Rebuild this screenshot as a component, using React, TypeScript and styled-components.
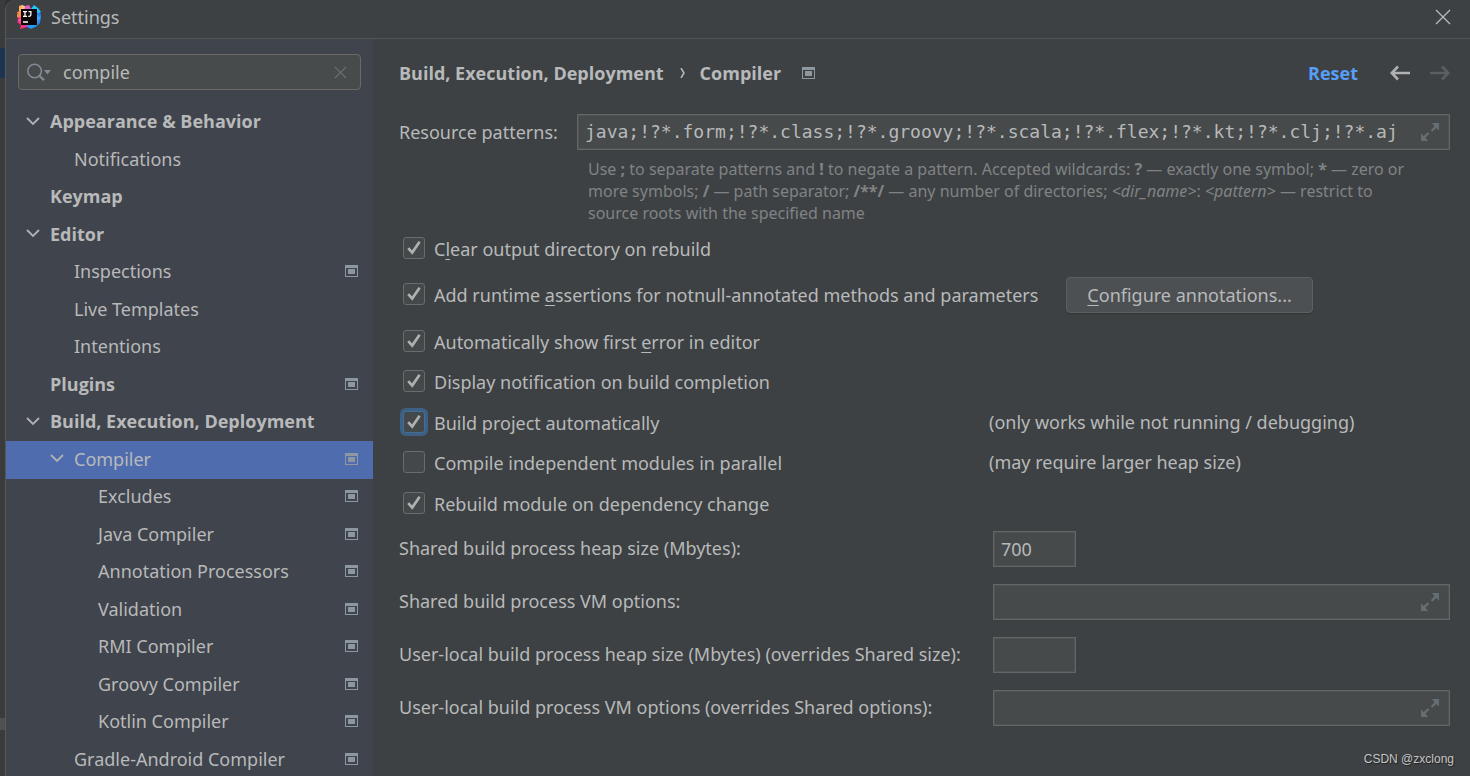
import React, { useState } from "react";
import styled, { createGlobalStyle, css } from "styled-components";

const Global = createGlobalStyle`
  *, *::before, *::after { box-sizing: border-box; }
  html, body { margin: 0; padding: 0; height: 100%; }
  #root { height: 100%; }
  body {
    background: #313335;
    color: #b8b9ba;
    font-family: "Noto Sans", "Open Sans", sans-serif;
    font-size: 18px;
    line-height: 24px;
    overflow: hidden;
  }
  input, button { font: inherit; color: inherit; }
`;

const Desktop = styled.div`
  display: flex;
  height: 100%;
`;

const EditorStrip = styled.div`
  display: flex;
  flex-direction: column;
  flex: none;
  width: 5px;
  background: #3a3b3c;
`;

const StripMark = styled.span<{ $top: number; $height: number; $color: string }>`
  flex: none;
  height: ${(p) => p.$height}px;
  margin-top: ${(p) => p.$top}px;
  background: ${(p) => p.$color};
`;

const Window = styled.main`
  display: flex;
  flex-direction: column;
  flex: 1;
  min-width: 0;
  background: #3d4143;
  border-left: 1px solid #56585a;
  border-top-left-radius: 10px;
  overflow: hidden;
`;

const TitleBar = styled.header`
  display: flex;
  align-items: center;
  flex: none;
  height: 39px;
  padding: 0 19px 4px 11px;
  border-bottom: 1px solid #525557;
`;

const TitleText = styled.h1`
  flex: 1;
  margin: 0 0 0 10px;
  font-size: 18px;
  font-weight: 400;
`;

const IconButton = styled.button`
  display: inline-flex;
  flex: none;
  padding: 0;
  border: 0;
  background: none;
`;

const Body = styled.div`
  display: flex;
  flex: 1;
  min-height: 0;
`;

const Sidebar = styled.aside`
  display: flex;
  flex-direction: column;
  flex: none;
  width: 367px;
  background: #40444c;
  overflow: hidden;
`;

const SearchBox = styled.label`
  display: flex;
  align-items: center;
  flex: none;
  height: 36px;
  margin: 15px 12px 14px;
  padding: 0 13px 0 8px;
  gap: 12px;
  background: #474b4c;
  border: 1px solid #6a6a68;
  border-radius: 4px;
`;

const PlainInput = styled.input<{ $mono?: boolean }>`
  flex: 1;
  min-width: 0;
  padding: 0;
  border: 0;
  outline: 0;
  background: none;
  ${(p) =>
    p.$mono &&
    css`
      font-family: "DejaVu Sans Mono", monospace;
    `}
`;

const Tree = styled.ul`
  margin: 0;
  padding: 0;
  list-style: none;
`;

const TreeRow = styled.li<{ $level: number; $selected?: boolean }>`
  display: flex;
  align-items: center;
  height: 37px;
  padding: 0 14px 3px ${(p) => 20 + p.$level * 24}px;
  background: ${(p) => (p.$selected ? "#4f6dae" : "transparent")};
  &:nth-child(even) {
    height: 38px;
  }
`;

const TreeToggle = styled.span`
  display: flex;
  flex: none;
  width: 24px;
`;

const boldFace = css`
  font-family: "Open Sans", "Noto Sans", sans-serif;
  font-weight: 700;
`;

const TreeLabel = styled.span<{ $bold?: boolean }>`
  flex: 1;
  white-space: nowrap;
  ${(p) => p.$bold && boldFace}
`;

const Content = styled.section`
  flex: 1;
  min-width: 0;
  padding: 22px 20px 0 26px;
`;

const Header = styled.div`
  display: flex;
  align-items: center;
  height: 24px;
`;

const Crumbs = styled.h2`
  display: flex;
  align-items: center;
  flex: 1;
  gap: 21px;
  margin: 0;
  font-size: 18px;
  ${boldFace}
`;

const CrumbPath = styled.span`
  display: flex;
  align-items: center;
  gap: 15px;
`;

const ResetLink = styled.a`
  margin-right: 32px;
  color: #589df6;
  text-decoration: none;
  ${boldFace}
`;

const HistoryButtons = styled.div`
  display: flex;
  gap: 20px;
`;

const PatternRow = styled.div`
  display: grid;
  grid-template-columns: 178px 1fr;
  align-items: center;
  margin-top: 29px;
`;

const Field = styled.div<{ $short?: boolean }>`
  display: flex;
  align-items: center;
  gap: 12px;
  width: ${(p) => (p.$short ? "83px" : "auto")};
  height: 36px;
  padding: 0 10px 0 7px;
  background: #464a4b;
  border: 1px solid #646566;
  box-shadow: inset 0 0 0 1px #505354;
`;

const Help = styled.p`
  grid-column: 2;
  margin: 8px 32px 0 11px;
  color: #808385;
  font-size: 16px;
  line-height: 22px;
`;

const Options = styled.div`
  margin-top: 4px;
`;

const OptionRow = styled.div<{ $tall?: boolean }>`
  display: grid;
  grid-template-columns: ${(p) => (p.$tall ? "auto 1fr" : "590px 1fr")};
  align-items: center;
  height: 41px;
  &:nth-child(even) {
    height: ${(p) => (p.$tall ? 52 : 40)}px;
  }
`;

const CheckLabel = styled.label`
  display: flex;
  align-items: center;
  padding-left: 4px;
  gap: 9px;
  white-space: nowrap;
`;

const CheckBox = styled.input<{ $ring?: boolean }>`
  appearance: none;
  flex: none;
  width: 22px;
  height: 22px;
  margin: 0 0 2px;
  border: 1px solid #6b6b6b;
  border-radius: 3px;
  background: #43494a center / 20px 20px no-repeat;
  &:checked {
    background-image: url("data:image/svg+xml,%3Csvg xmlns='http://www.w3.org/2000/svg' viewBox='0 0 20 20'%3E%3Cpath d='M4.2 10.2l4 4.4L15.6 3.8' fill='none' stroke='%23b0b0b0' stroke-width='2.7'/%3E%3C/svg%3E");
  }
  ${(p) =>
    p.$ring &&
    css`
      border-color: #466d94;
      box-shadow: 0 0 0 3px #3d6185;
    `}
`;

const Note = styled.span`
  padding-bottom: 2px;
`;

const Mnemonic = styled.u`
  text-underline-offset: 3px;
  text-decoration-thickness: 1px;
`;

const PushButton = styled.button`
  justify-self: start;
  height: 36px;
  margin-left: 28px;
  padding: 0 20px;
  background: #4c5052;
  border: 1px solid #5e6060;
  border-radius: 4px;
  box-shadow: 0 1px 1px #333638;
`;

const Fields = styled.div`
  display: grid;
  grid-template-columns: 590px 1fr;
  align-items: center;
  row-gap: 17px;
  padding-top: 7px;
  ${Field} {
    margin-left: 4px;
  }
`;

const FieldLabel = styled.label`
  padding-bottom: 2px;
`;

const Watermark = styled.div`
  position: absolute;
  right: 16px;
  bottom: 9px;
  color: #c4c5c6;
  font-family: "Liberation Sans", sans-serif;
  font-size: 12px;
  line-height: 16px;
  text-shadow: 1px 1px 1px #222222;
`;

const Logo = () => (
  <svg width="24" height="24" viewBox="0 0 24 24" aria-hidden="true">
    <path d="M2 1l3-1 3 2-2 8-5 3-1-3 2-3z" fill="#fdb25c" />
    <path d="M5 0l5 2-1 4-4 1z" fill="#fcc97a" />
    <path d="M8 1l4-1 2 4-7 2z" fill="#e45cc8" />
    <path d="M0 7l6-2v9l-6-2 1-2z" fill="#fb8a4a" />
    <path d="M0 12l6 1v6l5 2-4 2-4 1 1-4-4-3 2-2z" fill="#fe2f7c" />
    <path d="M0 15l5-2v5z" fill="#f553b0" />
    <path d="M8 19l6 1-1 3-4-1z" fill="#9a58d8" />
    <path d="M12 19h7l4-2-3 4-6 3-3-2z" fill="#1f9cf5" />
    <path d="M18 5l5 1 1 5-1 7-4 3z" fill="#2586f2" />
    <path d="M14 4l3-4 4 3 3 4-5 1z" fill="#22c9f5" />
    <path d="M19 9l5 4-5 5z" fill="#3aa6fb" />
    <rect x="4" y="4" width="16" height="16" fill="#0e0708" />
    <path d="M6 6.6h4M8 6v5.600M6 11.400h4M11.500 6.600h2.400v3q0 1.800-1.600 1.800h-1" fill="none" stroke="#fff" strokeWidth="1.3" />
    <path d="M6 17h5" stroke="#fff" strokeWidth="1.6" />
  </svg>
);

const CloseIcon = ({ size, color }: { size: number; color: string }) => (
  <svg width={size} height={size} viewBox="0 0 16 16" aria-hidden="true">
    <path d="M1 1l14 14M15 1L1 15" stroke={color} strokeWidth="1.3" />
  </svg>
);

const SearchIcon = () => (
  <svg width="24" height="20" viewBox="0 0 24 20" aria-hidden="true">
    <circle cx="7.6" cy="9" r="6.8" fill="none" stroke="#818b91" strokeWidth="1.6" />
    <path d="M12 13.5l5 4.6" stroke="#818b91" strokeWidth="2.2" />
    <path d="M17 8h7l-3.5 4.5z" fill="#818b91" />
  </svg>
);

const Chevron = () => (
  <svg width="14" height="9" viewBox="0 0 14 9" aria-hidden="true">
    <path d="M1 1l6 6 6-6" fill="none" stroke="#afb1b3" strokeWidth="1.8" />
  </svg>
);

const ProjectIcon = () => (
  <svg width="14" height="12" viewBox="0 0 14 12" aria-hidden="true">
    <path d="M0 0h13v12H0zM1 3v8h11V3z" fill="#8c979f" fillRule="evenodd" />
    <rect x="3" y="4" width="7" height="5" fill="#8c979f" />
  </svg>
);

const ArrowIcon = ({ color, flip }: { color: string; flip?: boolean }) => (
  <svg width="20" height="16" viewBox="0 0 20 16" aria-hidden="true">
    <path
      d={flip ? "M0 8h18M12 1.5L18.3 8 12 14.5" : "M20 8H2M8 1.5L1.7 8 8 14.5"}
      fill="none"
      stroke={color}
      strokeWidth="2.6"
    />
  </svg>
);

const ExpandIcon = () => (
  <svg width="18" height="18" viewBox="0 0 18 18" aria-hidden="true">
    <path d="M18 0v7.5L15.3 5l-4 3.8-1.600-1.600 3.800-4L11 0zM0 18v-7.500L2.700 13l4-3.800 1.600 1.600-3.800 4L7 18z" fill="#646e73" />
  </svg>
);

type Node = { label: string; level: number; bold?: boolean; open?: boolean; project?: boolean };

const nodes: Node[] = [
  { label: "Appearance & Behavior", level: 0, bold: true, open: true },
  { label: "Notifications", level: 1 },
  { label: "Keymap", level: 0, bold: true },
  { label: "Editor", level: 0, bold: true, open: true },
  { label: "Inspections", level: 1, project: true },
  { label: "Live Templates", level: 1 },
  { label: "Intentions", level: 1 },
  { label: "Plugins", level: 0, bold: true, project: true },
  { label: "Build, Execution, Deployment", level: 0, bold: true, open: true },
  { label: "Compiler", level: 1, open: true, project: true },
  { label: "Excludes", level: 2, project: true },
  { label: "Java Compiler", level: 2, project: true },
  { label: "Annotation Processors", level: 2, project: true },
  { label: "Validation", level: 2, project: true },
  { label: "RMI Compiler", level: 2, project: true },
  { label: "Groovy Compiler", level: 2, project: true },
  { label: "Kotlin Compiler", level: 2, project: true },
  { label: "Gradle-Android Compiler", level: 1, project: true },
];

type Option = { before: string; key?: string; after?: string; checked: boolean; note?: string; ring?: boolean; configure?: boolean };

const options: Option[] = [
  { before: "C", key: "l", after: "ear output directory on rebuild", checked: true },
  {
    before: "Add runtime ",
    key: "a",
    after: "ssertions for notnull-annotated methods and parameters",
    checked: true,
    configure: true,
  },
  { before: "Automatically show first ", key: "e", after: "rror in editor", checked: true },
  { before: "Display notification on build completion", checked: true },
  { before: "Build project automatically", checked: true, ring: true, note: "(only works while not running / debugging)" },
  { before: "Compile independent modules in parallel", checked: false, note: "(may require larger heap size)" },
  { before: "Rebuild module on dependency change", checked: true },
];

const fields = [
  { id: "shared-heap", label: "Shared build process heap size (Mbytes):", value: "700", short: true },
  { id: "shared-vm", label: "Shared build process VM options:", value: "" },
  { id: "local-heap", label: "User-local build process heap size (Mbytes) (overrides Shared size):", value: "", short: true },
  { id: "local-vm", label: "User-local build process VM options (overrides Shared options):", value: "" },
];

const ExpandButton = () => (
  <IconButton type="button" aria-label="Expand">
    <ExpandIcon />
  </IconButton>
);

export default function App() {
  const [query, setQuery] = useState("compile");
  return (
    <>
      <Global />
      <Desktop>
        <EditorStrip>
          <StripMark $top={48} $height={30} $color="#1d3450" />
          <StripMark $top={640} $height={12} $color="#4e5052" />
        </EditorStrip>
        <Window>
          <TitleBar>
            <Logo />
            <TitleText>Settings</TitleText>
            <IconButton type="button" aria-label="Close">
              <CloseIcon size={16} color="#b8babb" />
            </IconButton>
          </TitleBar>
          <Body>
            <Sidebar>
              <SearchBox>
                <SearchIcon />
                <PlainInput aria-label="Search settings" value={query} onChange={(e) => setQuery(e.target.value)} />
                <IconButton type="button" aria-label="Clear search" onClick={() => setQuery("")}>
                  <CloseIcon size={13} color="#6f7577" />
                </IconButton>
              </SearchBox>
              <Tree>
                {nodes.map((n) => (
                  <TreeRow key={n.label} $level={n.level} $selected={n.label === "Compiler"}>
                    <TreeToggle>{n.open && <Chevron />}</TreeToggle>
                    <TreeLabel $bold={n.bold}>{n.label}</TreeLabel>
                    {n.project && <ProjectIcon />}
                  </TreeRow>
                ))}
              </Tree>
            </Sidebar>
            <Content>
              <Header>
                <Crumbs>
                  <CrumbPath>
                    <span>Build, Execution, Deployment</span>
                    <svg width="6" height="10" viewBox="0 0 6 10" aria-hidden="true">
                      <path d="M2 0l3 5-3 5" fill="none" stroke="#bbbbbb" strokeWidth="1.5" />
                    </svg>
                    <span>Compiler</span>
                  </CrumbPath>
                  <ProjectIcon />
                </Crumbs>
                <ResetLink href="#reset">Reset</ResetLink>
                <HistoryButtons>
                  <IconButton type="button" aria-label="Back">
                    <ArrowIcon color="#afb1b3" />
                  </IconButton>
                  <IconButton type="button" aria-label="Forward">
                    <ArrowIcon color="#5c5e60" flip />
                  </IconButton>
                </HistoryButtons>
              </Header>
              <PatternRow>
                <label htmlFor="patterns">Resource patterns:</label>
                <Field>
                  <PlainInput
                    id="patterns"
                    $mono
                    defaultValue="java;!?*.form;!?*.class;!?*.groovy;!?*.scala;!?*.flex;!?*.kt;!?*.clj;!?*.aj"
                  />
                  <ExpandButton />
                </Field>
                <Help>
                  Use <b>;</b> to separate patterns and <b>!</b> to negate a pattern. Accepted wildcards: <b>?</b> — exactly
                  one symbol; <b>*</b> — zero or more symbols; <b>/</b> — path separator; <b>/**/</b> — any number of
                  directories; <i>&lt;dir_name&gt;</i>: <i>&lt;pattern&gt;</i> — restrict to source roots with the specified
                  name
                </Help>
              </PatternRow>
              <Options>
                {options.map((o) => (
                  <OptionRow key={o.before} $tall={o.configure}>
                    <CheckLabel>
                      <CheckBox type="checkbox" defaultChecked={o.checked} $ring={o.ring} />
                      <span>
                        {o.before}
                        {o.key && <Mnemonic>{o.key}</Mnemonic>}
                        {o.after}
                      </span>
                    </CheckLabel>
                    {o.note && <Note>{o.note}</Note>}
                    {o.configure && (
                      <PushButton type="button">
                        <Mnemonic>C</Mnemonic>onfigure annotations...
                      </PushButton>
                    )}
                  </OptionRow>
                ))}
              </Options>
              <Fields>
                {fields.map((f) => (
                  <React.Fragment key={f.id}>
                    <FieldLabel htmlFor={f.id}>{f.label}</FieldLabel>
                    <Field $short={f.short}>
                      <PlainInput id={f.id} defaultValue={f.value} />
                      {!f.short && <ExpandButton />}
                    </Field>
                  </React.Fragment>
                ))}
              </Fields>
            </Content>
          </Body>
        </Window>
      </Desktop>
      <Watermark>CSDN @zxclong</Watermark>
    </>
  );
}
